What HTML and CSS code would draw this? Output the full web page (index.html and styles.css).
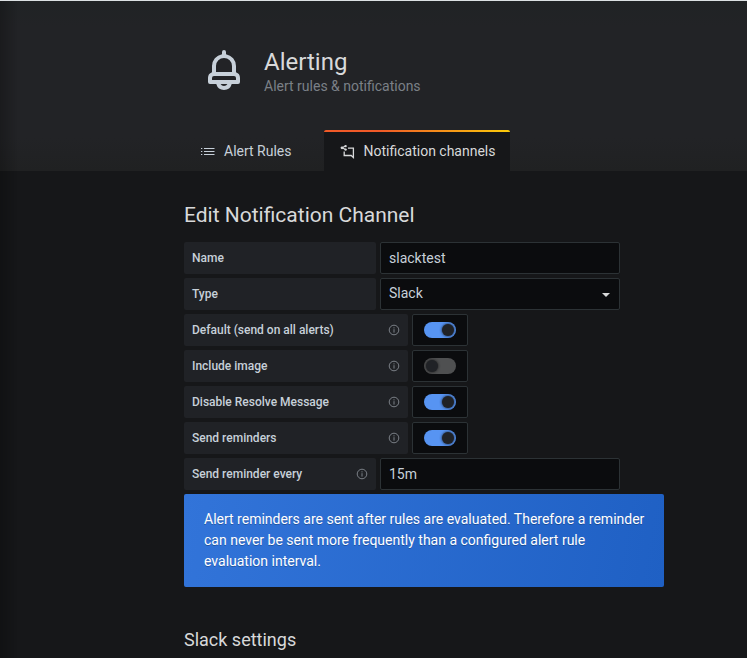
FILE: index.html
```html
<!DOCTYPE html>
<html lang="en">
<head>
<meta charset="utf-8">
<title>Alerting</title>
<link rel="stylesheet" href="styles.css">
</head>
<body>
<svg class="defs" width="0" height="0" aria-hidden="true">
  <symbol id="info" viewBox="0 0 12 12"><circle cx="6" cy="6" r="4.8" fill="none" stroke="currentColor"/><path d="M6 5.2V8.6M6 3.3V4.4" stroke="currentColor"/></symbol>
</svg>
<header class="page-header">
  <div class="title-row">
    <svg class="bell" viewBox="0 0 24 24"><path fill="currentColor" d="M18 13.18V10a6 6 0 0 0-5-5.91V3a1 1 0 0 0-2 0v1.09A6 6 0 0 0 6 10v3.18A3 3 0 0 0 4 16v2a1 1 0 0 0 1 1h3.14a4 4 0 0 0 7.72 0H19a1 1 0 0 0 1-1v-2a3 3 0 0 0-2-2.82ZM8 10a4 4 0 0 1 8 0v3H8Zm4 10a2 2 0 0 1-1.72-1h3.44A2 2 0 0 1 12 20Zm6-3H6v-1a1 1 0 0 1 1-1h10a1 1 0 0 1 1 1Z"/></svg>
    <div>
      <h1 class="title">Alerting</h1>
      <div class="subtitle">Alert rules &amp; notifications</div>
    </div>
  </div>
  <nav class="tabs">
    <a class="tab"><svg class="tab-icon" viewBox="0 0 16 16"><path d="M4 4.5h10.5M4 7.5h10.5M4 10.5h10.5M1 4.5h1.3M1 7.5h1.3M1 10.5h1.3" fill="none" stroke="currentColor" stroke-width="1.2"/></svg>Alert Rules</a>
    <a class="tab active"><svg class="tab-icon" viewBox="0 0 16 16"><path d="M8 4.2H13.4V13.6L11.2 11.5H4.2V7.4" fill="none" stroke="currentColor" stroke-width="1.3"/><path d="M5.6 2.1L2 3.8L5.6 5.6" fill="none" stroke="currentColor" stroke-width="1.1"/><g fill="currentColor"><circle cx="2" cy="3.8" r="1.4"/><circle cx="5.6" cy="2.1" r="1.2"/><circle cx="5.6" cy="5.6" r="1.2"/></g></svg>Notification channels</a>
  </nav>
</header>
<main class="content">
  <h2 class="heading">Edit Notification Channel</h2>
  <form class="form">
    <div class="row"><label class="label">Name</label><div class="field">slacktest</div></div>
    <div class="row"><label class="label">Type</label><div class="field select">Slack<i class="caret"></i></div></div>
    <div class="row"><label class="label wide">Default (send on all alerts)<svg class="info"><use href="#info"/></svg></label><div class="switch-box"><span class="switch on"></span></div></div>
    <div class="row"><label class="label wide">Include image<svg class="info"><use href="#info"/></svg></label><div class="switch-box"><span class="switch"></span></div></div>
    <div class="row"><label class="label wide">Disable Resolve Message<svg class="info"><use href="#info"/></svg></label><div class="switch-box"><span class="switch on"></span></div></div>
    <div class="row"><label class="label wide">Send reminders<svg class="info"><use href="#info"/></svg></label><div class="switch-box"><span class="switch on"></span></div></div>
    <div class="row"><label class="label">Send reminder every<svg class="info"><use href="#info"/></svg></label><div class="field">15m</div></div>
  </form>
  <div class="alert">Alert reminders are sent after rules are evaluated. Therefore a reminder can never be sent more frequently than a configured alert rule evaluation interval.</div>
  <h3 class="subheading">Slack settings</h3>
</main>
</body>
</html>
```
FILE: styles.css
```css
* { box-sizing: border-box; }
html { height: 100%; overflow: hidden; }
body {
  margin: 0;
  height: 658px;
  overflow: hidden;
  background: #161719;
  color: #d8d9da;
  font: 14px/21px Roboto, sans-serif;
}
body::before {
  content: "";
  position: fixed;
  inset: 1px auto 0 0;
  width: 17px;
  background: linear-gradient(90deg, rgba(0,0,0,.22), transparent);
}
h1, h2, h3 { margin: 0; font-weight: 400; }
.defs { position: absolute; }
.page-header {
  height: 171px;
  padding: 0 0 0 184px;
  border-top: 1px solid #dce1e3;
  background: linear-gradient(#202325, #222326 15%, #222326 80%, #202122);
  display: flex;
  flex-direction: column;
  justify-content: space-between;
}
.title-row { display: flex; padding: 45px 0 0 16px; }
.bell { width: 48px; height: 48px; margin-right: 16px; color: #c7d0d9; }
.title { font-size: 24px; line-height: 30px; margin-top: 1px; }
.subtitle { line-height: 18px; color: #7b8087; }
.tabs { display: flex; }
.tab { height: 41px; width: 140px; padding: 2px 0 0 16px; display: flex; align-items: center; color: #c7d0d9; }
.tab-icon { width: 16px; height: 16px; margin-right: 8px; }
.tab.active { position: relative; width: 186px; background: #161719; color: #d8d9da; }
.tab.active .tab-icon { margin-right: 7.5px; }
.tab.active::before {
  content: "";
  position: absolute;
  inset: 0 0 auto;
  height: 2px;
  border-radius: 2px 2px 0 0;
  background: linear-gradient(90deg, #f05a28 30%, #fbca0a 99%);
}
.content { width: 664px; padding: 32px 0 0 184px; }
.heading { font-size: 21px; line-height: 24px; margin-bottom: 15px; }
.form { display: flex; flex-direction: column; gap: 4px; }
.row { display: flex; gap: 4px; height: 32px; }
.label {
  width: 192px;
  padding: 0 8px;
  border-radius: 2px;
  background: #202226;
  color: #c7d0d9;
  font-size: 12px;
  font-weight: 500;
  display: flex;
  align-items: center;
  justify-content: space-between;
}
.wide { width: 224px; }
.info { width: 12px; height: 12px; color: #7b8087; }
.field {
  width: 240px;
  padding: 0 8px;
  border: 1px solid #2c3235;
  border-radius: 2px;
  background: #0b0c0e;
  color: #c7d0d9;
  line-height: 30px;
}
.select { display: flex; align-items: center; justify-content: space-between; line-height: 28px; padding-bottom: 2px; }
.caret { border: 4px solid transparent; border-top-color: #d8d9da; border-bottom: 0; margin: 4px 1px 0 0; }
.switch-box {
  width: 56px;
  border: 1px solid #2c3235;
  border-radius: 2px;
  background: #0b0c0e;
  display: flex;
  align-items: center;
  justify-content: center;
}
.switch { width: 32px; height: 16px; padding: 2px; border-radius: 8px; background: #4f5051; display: flex; overflow: hidden; }
.switch::before { content: ""; width: 12px; height: 12px; border-radius: 50%; background: #202226; box-shadow: 0 0 3px #111; }
.switch.on { background: #5794f2; justify-content: flex-end; }
.alert {
  margin-top: 4px;
  height: 93px;
  padding: 15px 16px 15px 20px;
  border-radius: 2px;
  background: linear-gradient(100deg, #3274d9, #1f60c4);
  color: #fff;
  text-shadow: 0 1px 0 rgba(0,0,0,.25);
}
.subheading { font-size: 18px; line-height: 22px; margin-top: 42px; }
```
